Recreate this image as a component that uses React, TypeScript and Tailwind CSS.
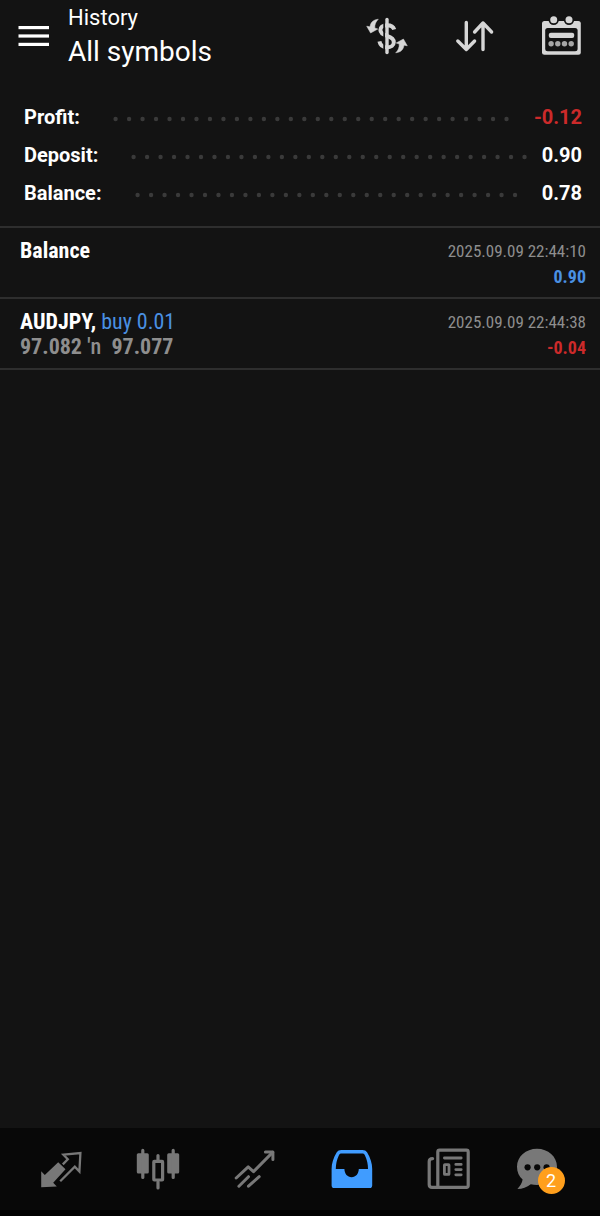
import React from "react";
import clsx from "clsx";

interface SummaryItem {
  label: string;
  value: string;
  negative?: boolean;
}

interface Deal {
  title: string;
  side?: string;
  prices?: [string, string];
  time: string;
  result: string;
  negative?: boolean;
}

const summary: SummaryItem[] = [
  { label: "Profit:", value: "-0.12", negative: true },
  { label: "Deposit:", value: "0.90" },
  { label: "Balance:", value: "0.78" },
];

const deals: Deal[] = [
  { title: "Balance", time: "2025.09.09 22:44:10", result: "0.90" },
  {
    title: "AUDJPY,",
    side: "buy 0.01",
    prices: ["97.082", "97.077"],
    time: "2025.09.09 22:44:38",
    result: "-0.04",
    negative: true,
  },
];

function Icon({ children }: { children: React.ReactNode }) {
  return (
    <svg viewBox="0 0 48 48" className="size-12" fill="none" aria-hidden="true">
      {children}
    </svg>
  );
}

function MenuIcon() {
  return (
    <svg viewBox="0 0 32 24" className="h-6 w-8" fill="currentColor" aria-hidden="true">
      <rect x="0.5" y="2" width="30.5" height="3.2" />
      <rect x="0.5" y="10.4" width="30.5" height="3.2" />
      <rect x="0.5" y="18.8" width="30.5" height="3.2" />
    </svg>
  );
}

function SymbolIcon() {
  const arrow = "M15.3 7.2C10.3 7.8 7.6 10.2 7 14.8L3.7 14.2L7.6 21L14.8 17L11.8 16C11.6 12.4 12.8 9.6 15.3 7.2Z";
  return (
    <Icon>
      <path
        d="M31.2 17.6C30.4 14.6 27.6 13.2 24 13.2C19.6 13.2 17.4 15.3 17.4 18C17.4 21.4 20.6 22.8 24 23.9C27.8 25.1 30.8 26.7 30.8 30.2C30.8 33.4 28 35.4 24 35.4C19.8 35.4 17.2 33 16.4 29.4"
        stroke="currentColor"
        strokeWidth="4"
      />
      <path d="M21.2 7V41" stroke="#131313" strokeWidth="1.8" />
      <path d="M24 7.5V40.5" stroke="currentColor" strokeWidth="3.4" strokeLinecap="round" />
      <path d={arrow} fill="currentColor" stroke="currentColor" strokeWidth="0.5" />
      <path d={arrow} fill="currentColor" stroke="currentColor" strokeWidth="0.5" transform="rotate(180 24 24)" />
    </Icon>
  );
}

function SortIcon() {
  return (
    <Icon>
      <g stroke="currentColor" strokeWidth="3.4" strokeLinecap="round" strokeLinejoin="round">
        <path d="M16.3 10.5V37.5M7.8 29L16.3 37.5L24.6 29" />
        <path d="M33 37.5V11M24.6 20L33 11L41.6 20" />
      </g>
    </Icon>
  );
}

function CalendarIcon() {
  return (
    <Icon>
      <rect x="5" y="9" width="38.8" height="33.8" rx="2.5" fill="currentColor" />
      <rect x="8.2" y="16" width="32.4" height="23.3" rx="2.5" fill="#131313" />
      <g fill="#131313">
        <circle cx="16.7" cy="7.7" r="5.2" />
        <circle cx="32" cy="7.7" r="5.2" />
      </g>
      <circle cx="16.7" cy="7.7" r="3.5" fill="currentColor" />
      <circle cx="32" cy="7.7" r="3.5" fill="currentColor" />
      <rect x="11.8" y="20.7" width="25.4" height="5.3" rx="2" fill="currentColor" />
      <g fill="#a6a6a6">
        <circle cx="14.1" cy="31.7" r="2.7" />
        <circle cx="20.8" cy="31.7" r="2.7" />
        <circle cx="27.5" cy="31.7" r="2.7" />
        <circle cx="34.2" cy="31.7" r="2.7" />
      </g>
    </Icon>
  );
}

function QuotesIcon() {
  return (
    <Icon>
      <path d="M5.2 42.3V26.3L8.8 30L22.2 17.3L29.5 24.3L17.2 37.7L20.8 41.5Z" fill="currentColor" />
      <path
        d="M26.8 19.4L31.8 14.2L27.4 9.7L44.4 8L43.4 26.6L38.8 21.7L24.2 36.3"
        stroke="currentColor"
        strokeWidth="2.3"
      />
    </Icon>
  );
}

function ChartIcon() {
  return (
    <Icon>
      <g fill="currentColor">
        <rect x="3.8" y="8.3" width="12" height="20.2" rx="1.5" />
        <rect x="34.2" y="8.3" width="12" height="20.2" rx="1.5" />
      </g>
      <g stroke="currentColor" strokeWidth="3.2" strokeLinecap="round">
        <path d="M9.8 5.4V32.4M40.2 5.4V32.4M25 10.6V15M25 37V43" />
        <rect x="20.8" y="16.4" width="8.8" height="18.6" rx="0.5" />
      </g>
    </Icon>
  );
}

function TradeIcon() {
  return (
    <Icon>
      <g stroke="currentColor" strokeWidth="3" strokeLinecap="round" strokeLinejoin="round">
        <path d="M6.2 33L18.2 21.8L23.5 26.6L42.6 7.4" />
        <path d="M35.4 7H42.9V14.6" />
        <path d="M18.5 31.7L8.9 41.2M29.2 31.7L18.5 41.2" />
      </g>
    </Icon>
  );
}

function HistoryIcon() {
  return (
    <Icon>
      <path
        fillRule="evenodd"
        fill="currentColor"
        d="M14.4 5H35.4C37.4 5 39.2 5.8 40.2 7.6C43.4 13 45.2 18.4 45.2 24V40.4C45.2 42 44.2 43 42.6 43H7.2C5.6 43 4.6 42 4.6 40.4V24C4.6 18.4 6.4 13 9.6 7.6C10.6 5.8 12.4 5 14.4 5ZM14.6 8.6C13.2 8.6 12.4 9.2 11.8 10.4C9.8 14.6 8.8 19 8.8 24H17.4C17.6 28.8 20.4 32.2 24.6 32.2C28.8 32.2 31.6 28.8 31.8 24H41C41 19 40 14.6 38 10.4C37.4 9.2 36.6 8.6 35.2 8.6Z"
      />
    </Icon>
  );
}

function NewsIcon() {
  return (
    <Icon>
      <g stroke="currentColor" strokeWidth="3.2" strokeLinecap="round">
        <rect x="13.8" y="5.2" width="30.4" height="37.2" rx="1.8" />
        <path d="M8.6 13.6C6.2 13.6 5.2 14.8 5.2 16.6V39.6C5.2 41.6 6.2 42.4 8 42.4H13.8" />
        <path d="M20.4 13H37.2M31.8 19.4H37.2M31.8 24.6H37.2M31.8 29.8H37.2" strokeWidth="2.8" />
        <rect x="20.4" y="19.6" width="4.6" height="9.8" rx="0.5" strokeWidth="2.8" />
      </g>
    </Icon>
  );
}

function ChatIcon() {
  return (
    <Icon>
      <path
        d="M20 3.8C31.2 3.8 40 11.6 40 21.8C40 32 31.2 40 20 40C17.8 40 15.8 39.8 13.8 39.2C9.8 42.2 5.4 43.8 0.4 44C3 41.2 5.2 38.2 5.6 34.6C2 31.4 0 27 0 21.8C0 11.6 8.8 3.8 20 3.8Z"
        fill="currentColor"
      />
      <g fill="#080808">
        <circle cx="10.6" cy="22.3" r="3.1" />
        <circle cx="20.2" cy="22.3" r="3.1" />
        <circle cx="29.6" cy="22.3" r="3.1" />
      </g>
    </Icon>
  );
}

const tabs = [
  { name: "Quotes", icon: QuotesIcon },
  { name: "Charts", icon: ChartIcon },
  { name: "Trade", icon: TradeIcon },
  { name: "History", icon: HistoryIcon, active: true },
  { name: "News", icon: NewsIcon },
  { name: "Messages", icon: ChatIcon, badge: 2 },
];

function Header() {
  return (
    <header className="flex items-start justify-between pl-[18px] pr-[15px]">
      <div className="flex items-start">
        <button type="button" aria-label="Menu" className="mt-6">
          <MenuIcon />
        </button>
        <div className="ml-[18px] pt-1">
          <p className="text-[22px] leading-7">History</p>
          <h1 className="text-[28px] leading-10">All symbols</h1>
        </div>
      </div>
      <div className="flex gap-[39px] pt-3 text-[#d6d6d6]">
        <button type="button" aria-label="Symbols">
          <SymbolIcon />
        </button>
        <button type="button" aria-label="Sort">
          <SortIcon />
        </button>
        <button type="button" aria-label="Period">
          <CalendarIcon />
        </button>
      </div>
    </header>
  );
}

function SummaryRow({ label, value, negative }: SummaryItem) {
  return (
    <div className="flex h-[38px] items-center text-xl font-bold">
      <dt>{label}</dt>
      {/* Dotted leader */}
      <svg className="mt-1 mr-4 ml-8 h-1 min-w-0 flex-1 overflow-visible" aria-hidden="true">
        <line x1="3.6" y1="2" x2="100%" y2="2" stroke="#3a3a3a" strokeWidth="4.4" strokeLinecap="round" strokeDasharray="0 13.48" />
      </svg>
      <dd className={clsx(negative && "text-[#cc2a2a]")}>{value}</dd>
    </div>
  );
}

function DealRow({ title, side, prices, time, result, negative }: Deal) {
  return (
    <li className="flex min-h-[71px] justify-between border-b-2 border-[#2e2e2e] pt-2.5 pr-3.5 pb-2 pl-5 font-['Roboto_Condensed','Liberation_Sans_Narrow',Roboto,sans-serif]">
      <div className="text-[22px] leading-[25px]">
        <p>
          <span className="font-bold">{title}</span>
          {side && <span className="text-[#4a90e2]"> {side}</span>}
        </p>
        {prices && (
          <p className="font-bold text-[#8e8e8e]">
            {prices[0]} <span className="font-medium">′n</span>&nbsp; {prices[1]}
          </p>
        )}
      </div>
      <div className="pt-px text-right leading-[25px]">
        <p className="text-[17px] leading-[25px] text-[#8e8e8e]">{time}</p>
        <p className={clsx("text-[18px] leading-[25px] font-bold", negative ? "text-[#cc2a2a]" : "text-[#4a90e2]")}>
          {result}
        </p>
      </div>
    </li>
  );
}

function TabBar() {
  return (
    <nav className="border-b-[6px] border-black bg-[#080808] pr-[7px] pl-[11px]">
      <ul className="flex">
        {tabs.map(({ name, icon: TabIcon, active, badge }) => (
          <li key={name} className="flex-1">
            <a
              href={`#${name.toLowerCase()}`}
              aria-label={name}
              className={clsx(
                "flex h-[82px] items-center justify-center",
                active ? "text-[#409cff]" : "text-[#787878]"
              )}
            >
              <span className={clsx("relative", badge && "mr-2")}>
                <TabIcon />
                {badge && (
                  <span className="absolute top-[22px] left-[21px] flex size-[27px] items-center justify-center rounded-full bg-[#ff9f1c] text-lg text-white">
                    {badge}
                  </span>
                )}
              </span>
            </a>
          </li>
        ))}
      </ul>
    </nav>
  );
}

export default function App() {
  return (
    <div className="flex min-h-screen flex-col bg-[#131313] font-[Roboto,sans-serif] text-white">
      <Header />
      <main className="flex-1">
        <dl className="border-b-2 border-[#2e2e2e] pt-[26px] pr-[18px] pb-3.5 pl-6">
          {summary.map((item) => (
            <SummaryRow key={item.label} {...item} />
          ))}
        </dl>
        <ul>
          {deals.map((deal) => (
            <DealRow key={deal.time} {...deal} />
          ))}
        </ul>
      </main>
      <TabBar />
    </div>
  );
}
